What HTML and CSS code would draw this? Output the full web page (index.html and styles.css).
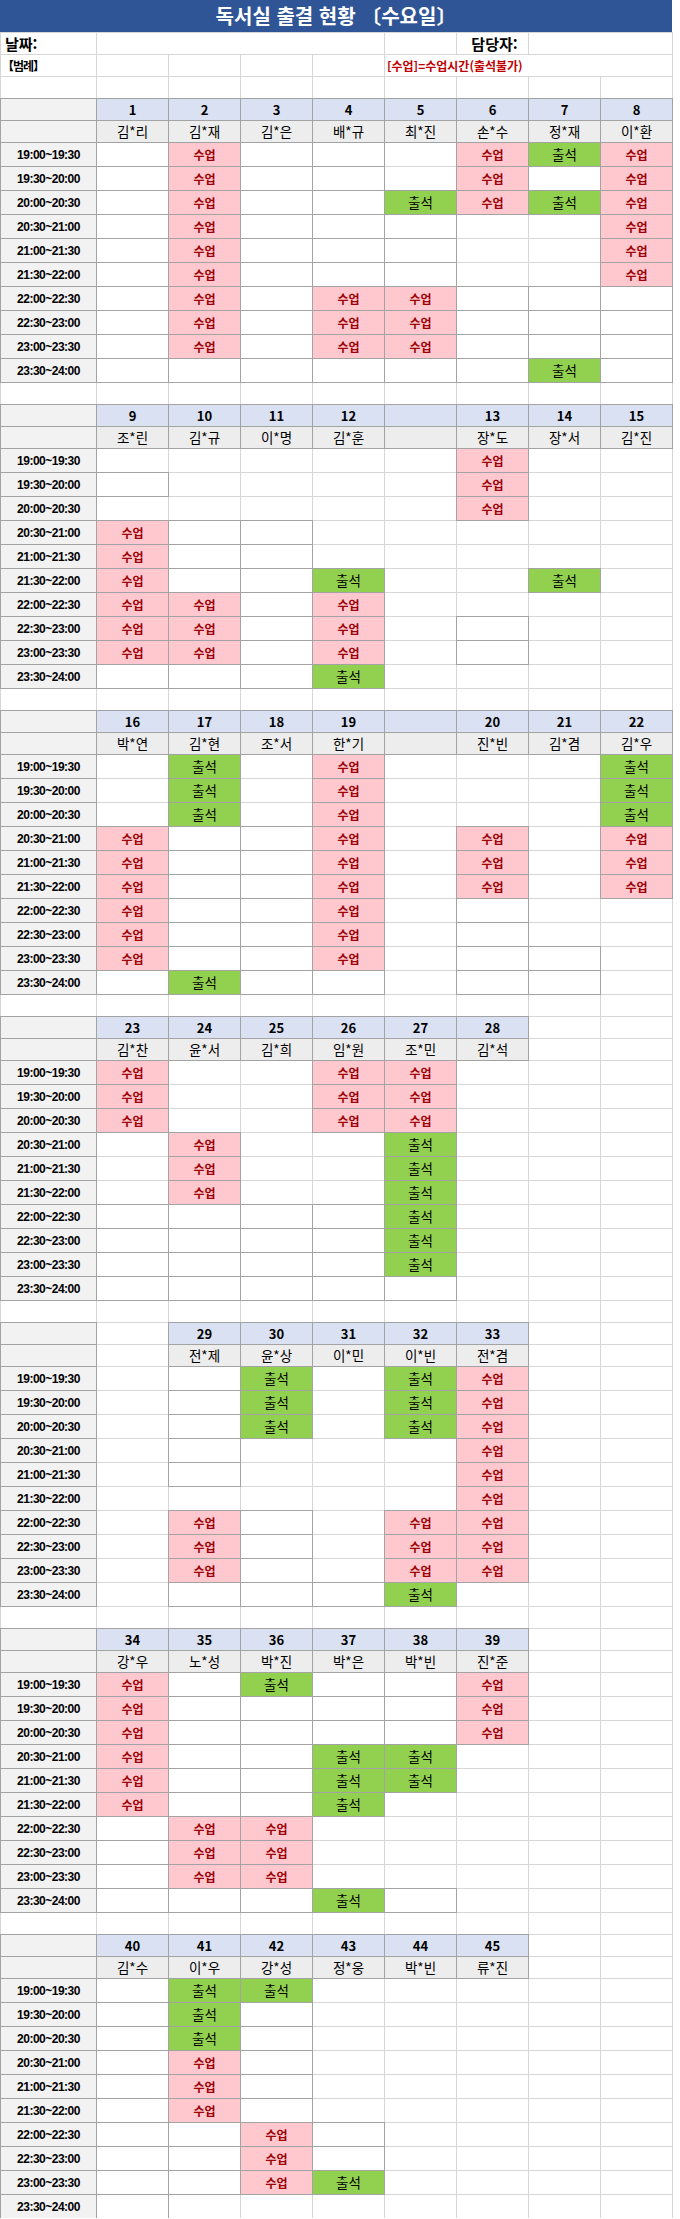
FILE: index.html
```html
<!DOCTYPE html>
<html lang="ko">
<head>
<meta charset="utf-8">
<title>독서실 출결 현황</title>
<link rel="stylesheet" href="styles.css">
</head>
<body>
<div class="sheet">
  <div class="title">독서실 출결 현황 〔수요일〕</div>

  <div class="row">
    <div class="c left big">날짜:</div>
    <div class="c span4"></div>
    <div class="c"></div>
    <div class="c big">담당자:</div>
    <div class="c span2"></div>
  </div>
  <div class="row">
    <div class="c left legend">【범례】</div>
    <div class="c"></div><div class="c"></div><div class="c"></div><div class="c"></div>
    <div class="c span4 left note">[수업]=수업시간(출석불가)</div>
  </div>
  <div class="row">
    <div class="c"></div><div class="c"></div><div class="c"></div><div class="c"></div><div class="c"></div><div class="c"></div><div class="c"></div><div class="c"></div><div class="c"></div>
  </div>

  <!-- Block 1 -->
  <div class="row">
    <div class="c lbl"></div>
    <div class="c num">1</div><div class="c num">2</div><div class="c num">3</div><div class="c num">4</div><div class="c num">5</div><div class="c num">6</div><div class="c num">7</div><div class="c num">8</div>
  </div>
  <div class="row">
    <div class="c lbl"></div>
    <div class="c nm">김*리</div><div class="c nm">김*재</div><div class="c nm">김*은</div><div class="c nm">배*규</div><div class="c nm">최*진</div><div class="c nm">손*수</div><div class="c nm">정*재</div><div class="c nm">이*환</div>
  </div>
  <div class="row tr"><div class="c lbl">19:00~19:30</div>
    <div class="c bd"></div><div class="c cls">수업</div><div class="c bd"></div><div class="c bd"></div><div class="c"></div><div class="c cls">수업</div><div class="c att">출석</div><div class="c cls">수업</div></div>
  <div class="row tr"><div class="c lbl">19:30~20:00</div>
    <div class="c bd"></div><div class="c cls">수업</div><div class="c bd"></div><div class="c bd"></div><div class="c"></div><div class="c cls">수업</div><div class="c bd"></div><div class="c cls">수업</div></div>
  <div class="row tr"><div class="c lbl">20:00~20:30</div>
    <div class="c bd"></div><div class="c cls">수업</div><div class="c bd"></div><div class="c bd"></div><div class="c att">출석</div><div class="c cls">수업</div><div class="c att">출석</div><div class="c cls">수업</div></div>
  <div class="row tr"><div class="c lbl">20:30~21:00</div>
    <div class="c bd"></div><div class="c cls">수업</div><div class="c bd"></div><div class="c bd"></div><div class="c bd"></div><div class="c"></div><div class="c"></div><div class="c cls">수업</div></div>
  <div class="row tr"><div class="c lbl">21:00~21:30</div>
    <div class="c bd"></div><div class="c cls">수업</div><div class="c bd"></div><div class="c bd"></div><div class="c bd"></div><div class="c"></div><div class="c"></div><div class="c cls">수업</div></div>
  <div class="row tr"><div class="c lbl">21:30~22:00</div>
    <div class="c bd"></div><div class="c cls">수업</div><div class="c bd"></div><div class="c bd"></div><div class="c bd"></div><div class="c"></div><div class="c"></div><div class="c cls">수업</div></div>
  <div class="row tr"><div class="c lbl">22:00~22:30</div>
    <div class="c bd"></div><div class="c cls">수업</div><div class="c bd"></div><div class="c cls">수업</div><div class="c cls">수업</div><div class="c bd"></div><div class="c bd"></div><div class="c bd"></div></div>
  <div class="row tr"><div class="c lbl">22:30~23:00</div>
    <div class="c bd"></div><div class="c cls">수업</div><div class="c bd"></div><div class="c cls">수업</div><div class="c cls">수업</div><div class="c bd"></div><div class="c bd"></div><div class="c bd"></div></div>
  <div class="row tr"><div class="c lbl">23:00~23:30</div>
    <div class="c bd"></div><div class="c cls">수업</div><div class="c bd"></div><div class="c cls">수업</div><div class="c cls">수업</div><div class="c bd"></div><div class="c bd"></div><div class="c bd"></div></div>
  <div class="row tr"><div class="c lbl">23:30~24:00</div>
    <div class="c bd"></div><div class="c bd"></div><div class="c bd"></div><div class="c bd"></div><div class="c bd"></div><div class="c bd"></div><div class="c att">출석</div><div class="c bd"></div></div>
  <div class="row">
    <div class="c"></div><div class="c"></div><div class="c"></div><div class="c"></div><div class="c"></div><div class="c"></div><div class="c"></div><div class="c"></div><div class="c"></div>
  </div>

  <!-- Block 2 -->
  <div class="row">
    <div class="c lbl"></div>
    <div class="c num">9</div><div class="c num">10</div><div class="c num">11</div><div class="c num">12</div><div class="c num"></div><div class="c num">13</div><div class="c num">14</div><div class="c num">15</div>
  </div>
  <div class="row">
    <div class="c lbl"></div>
    <div class="c nm">조*린</div><div class="c nm">김*규</div><div class="c nm">이*명</div><div class="c nm">김*훈</div><div class="c nm"></div><div class="c nm">장*도</div><div class="c nm">장*서</div><div class="c nm">김*진</div>
  </div>
  <div class="row tr"><div class="c lbl">19:00~19:30</div>
    <div class="c"></div><div class="c"></div><div class="c"></div><div class="c"></div><div class="c"></div><div class="c cls">수업</div><div class="c"></div><div class="c"></div></div>
  <div class="row tr"><div class="c lbl">19:30~20:00</div>
    <div class="c bd"></div><div class="c"></div><div class="c"></div><div class="c"></div><div class="c"></div><div class="c cls">수업</div><div class="c"></div><div class="c"></div></div>
  <div class="row tr"><div class="c lbl">20:00~20:30</div>
    <div class="c"></div><div class="c"></div><div class="c"></div><div class="c"></div><div class="c"></div><div class="c cls">수업</div><div class="c"></div><div class="c"></div></div>
  <div class="row tr"><div class="c lbl">20:30~21:00</div>
    <div class="c cls">수업</div><div class="c bd"></div><div class="c bd"></div><div class="c"></div><div class="c"></div><div class="c"></div><div class="c"></div><div class="c"></div></div>
  <div class="row tr"><div class="c lbl">21:00~21:30</div>
    <div class="c cls">수업</div><div class="c bd"></div><div class="c bd"></div><div class="c"></div><div class="c"></div><div class="c"></div><div class="c"></div><div class="c"></div></div>
  <div class="row tr"><div class="c lbl">21:30~22:00</div>
    <div class="c cls">수업</div><div class="c bd"></div><div class="c bd"></div><div class="c att">출석</div><div class="c"></div><div class="c"></div><div class="c att">출석</div><div class="c"></div></div>
  <div class="row tr"><div class="c lbl">22:00~22:30</div>
    <div class="c cls">수업</div><div class="c cls">수업</div><div class="c bd"></div><div class="c cls">수업</div><div class="c"></div><div class="c"></div><div class="c"></div><div class="c"></div></div>
  <div class="row tr"><div class="c lbl">22:30~23:00</div>
    <div class="c cls">수업</div><div class="c cls">수업</div><div class="c bd"></div><div class="c cls">수업</div><div class="c"></div><div class="c bd"></div><div class="c"></div><div class="c"></div></div>
  <div class="row tr"><div class="c lbl">23:00~23:30</div>
    <div class="c cls">수업</div><div class="c cls">수업</div><div class="c bd"></div><div class="c cls">수업</div><div class="c"></div><div class="c bd"></div><div class="c"></div><div class="c"></div></div>
  <div class="row tr"><div class="c lbl">23:30~24:00</div>
    <div class="c bd"></div><div class="c bd"></div><div class="c bd"></div><div class="c att">출석</div><div class="c"></div><div class="c"></div><div class="c"></div><div class="c"></div></div>
  <div class="row">
    <div class="c"></div><div class="c"></div><div class="c"></div><div class="c"></div><div class="c"></div><div class="c"></div><div class="c"></div><div class="c"></div><div class="c"></div>
  </div>

  <!-- Block 3 -->
  <div class="row">
    <div class="c lbl"></div>
    <div class="c num">16</div><div class="c num">17</div><div class="c num">18</div><div class="c num">19</div><div class="c num"></div><div class="c num">20</div><div class="c num">21</div><div class="c num">22</div>
  </div>
  <div class="row">
    <div class="c lbl"></div>
    <div class="c nm">박*연</div><div class="c nm">김*현</div><div class="c nm">조*서</div><div class="c nm">한*기</div><div class="c nm"></div><div class="c nm">진*빈</div><div class="c nm">김*겸</div><div class="c nm">김*우</div>
  </div>
  <div class="row tr"><div class="c lbl">19:00~19:30</div>
    <div class="c"></div><div class="c att">출석</div><div class="c"></div><div class="c cls">수업</div><div class="c"></div><div class="c"></div><div class="c"></div><div class="c att">출석</div></div>
  <div class="row tr"><div class="c lbl">19:30~20:00</div>
    <div class="c"></div><div class="c att">출석</div><div class="c"></div><div class="c cls">수업</div><div class="c"></div><div class="c"></div><div class="c"></div><div class="c att">출석</div></div>
  <div class="row tr"><div class="c lbl">20:00~20:30</div>
    <div class="c"></div><div class="c att">출석</div><div class="c"></div><div class="c cls">수업</div><div class="c"></div><div class="c"></div><div class="c"></div><div class="c att">출석</div></div>
  <div class="row tr"><div class="c lbl">20:30~21:00</div>
    <div class="c cls">수업</div><div class="c bd"></div><div class="c bd"></div><div class="c cls">수업</div><div class="c"></div><div class="c cls">수업</div><div class="c"></div><div class="c cls">수업</div></div>
  <div class="row tr"><div class="c lbl">21:00~21:30</div>
    <div class="c cls">수업</div><div class="c bd"></div><div class="c bd"></div><div class="c cls">수업</div><div class="c"></div><div class="c cls">수업</div><div class="c"></div><div class="c cls">수업</div></div>
  <div class="row tr"><div class="c lbl">21:30~22:00</div>
    <div class="c cls">수업</div><div class="c bd"></div><div class="c bd"></div><div class="c cls">수업</div><div class="c"></div><div class="c cls">수업</div><div class="c"></div><div class="c cls">수업</div></div>
  <div class="row tr"><div class="c lbl">22:00~22:30</div>
    <div class="c cls">수업</div><div class="c bd"></div><div class="c bd"></div><div class="c cls">수업</div><div class="c"></div><div class="c bd"></div><div class="c"></div><div class="c"></div></div>
  <div class="row tr"><div class="c lbl">22:30~23:00</div>
    <div class="c cls">수업</div><div class="c bd"></div><div class="c bd"></div><div class="c cls">수업</div><div class="c"></div><div class="c bd"></div><div class="c"></div><div class="c"></div></div>
  <div class="row tr"><div class="c lbl">23:00~23:30</div>
    <div class="c cls">수업</div><div class="c bd"></div><div class="c bd"></div><div class="c cls">수업</div><div class="c"></div><div class="c bd"></div><div class="c bd"></div><div class="c"></div></div>
  <div class="row tr"><div class="c lbl">23:30~24:00</div>
    <div class="c bd"></div><div class="c att">출석</div><div class="c bd"></div><div class="c bd"></div><div class="c"></div><div class="c bd"></div><div class="c bd"></div><div class="c"></div></div>
  <div class="row">
    <div class="c"></div><div class="c"></div><div class="c"></div><div class="c"></div><div class="c"></div><div class="c"></div><div class="c"></div><div class="c"></div><div class="c"></div>
  </div>

  <!-- Block 4 -->
  <div class="row">
    <div class="c lbl"></div>
    <div class="c num">23</div><div class="c num">24</div><div class="c num">25</div><div class="c num">26</div><div class="c num">27</div><div class="c num">28</div><div class="c"></div><div class="c"></div>
  </div>
  <div class="row">
    <div class="c lbl"></div>
    <div class="c nm">김*찬</div><div class="c nm">윤*서</div><div class="c nm">김*희</div><div class="c nm">임*원</div><div class="c nm">조*민</div><div class="c nm">김*석</div><div class="c"></div><div class="c"></div>
  </div>
  <div class="row tr"><div class="c lbl">19:00~19:30</div>
    <div class="c cls">수업</div><div class="c"></div><div class="c"></div><div class="c cls">수업</div><div class="c cls">수업</div><div class="c"></div><div class="c"></div><div class="c"></div></div>
  <div class="row tr"><div class="c lbl">19:30~20:00</div>
    <div class="c cls">수업</div><div class="c"></div><div class="c"></div><div class="c cls">수업</div><div class="c cls">수업</div><div class="c"></div><div class="c"></div><div class="c"></div></div>
  <div class="row tr"><div class="c lbl">20:00~20:30</div>
    <div class="c cls">수업</div><div class="c"></div><div class="c"></div><div class="c cls">수업</div><div class="c cls">수업</div><div class="c"></div><div class="c"></div><div class="c"></div></div>
  <div class="row tr"><div class="c lbl">20:30~21:00</div>
    <div class="c"></div><div class="c cls">수업</div><div class="c"></div><div class="c"></div><div class="c att">출석</div><div class="c"></div><div class="c"></div><div class="c"></div></div>
  <div class="row tr"><div class="c lbl">21:00~21:30</div>
    <div class="c"></div><div class="c cls">수업</div><div class="c"></div><div class="c"></div><div class="c att">출석</div><div class="c"></div><div class="c"></div><div class="c"></div></div>
  <div class="row tr"><div class="c lbl">21:30~22:00</div>
    <div class="c"></div><div class="c cls">수업</div><div class="c"></div><div class="c"></div><div class="c att">출석</div><div class="c"></div><div class="c"></div><div class="c"></div></div>
  <div class="row tr"><div class="c lbl">22:00~22:30</div>
    <div class="c bd"></div><div class="c bd"></div><div class="c bd"></div><div class="c bd"></div><div class="c att">출석</div><div class="c"></div><div class="c"></div><div class="c"></div></div>
  <div class="row tr"><div class="c lbl">22:30~23:00</div>
    <div class="c bd"></div><div class="c bd"></div><div class="c bd"></div><div class="c bd"></div><div class="c att">출석</div><div class="c"></div><div class="c"></div><div class="c"></div></div>
  <div class="row tr"><div class="c lbl">23:00~23:30</div>
    <div class="c bd"></div><div class="c bd"></div><div class="c bd"></div><div class="c bd"></div><div class="c att">출석</div><div class="c"></div><div class="c"></div><div class="c"></div></div>
  <div class="row tr"><div class="c lbl">23:30~24:00</div>
    <div class="c bd"></div><div class="c bd"></div><div class="c bd"></div><div class="c bd"></div><div class="c bd"></div><div class="c"></div><div class="c"></div><div class="c"></div></div>
  <div class="row">
    <div class="c"></div><div class="c"></div><div class="c"></div><div class="c"></div><div class="c"></div><div class="c"></div><div class="c"></div><div class="c"></div><div class="c"></div>
  </div>

  <!-- Block 5 -->
  <div class="row">
    <div class="c lbl"></div>
    <div class="c"></div><div class="c num">29</div><div class="c num">30</div><div class="c num">31</div><div class="c num">32</div><div class="c num">33</div><div class="c"></div><div class="c"></div>
  </div>
  <div class="row">
    <div class="c lbl"></div>
    <div class="c"></div><div class="c nm">전*제</div><div class="c nm">윤*상</div><div class="c nm">이*민</div><div class="c nm">이*빈</div><div class="c nm">전*겸</div><div class="c"></div><div class="c"></div>
  </div>
  <div class="row tr"><div class="c lbl">19:00~19:30</div>
    <div class="c"></div><div class="c bd"></div><div class="c att">출석</div><div class="c"></div><div class="c att">출석</div><div class="c cls">수업</div><div class="c"></div><div class="c"></div></div>
  <div class="row tr"><div class="c lbl">19:30~20:00</div>
    <div class="c"></div><div class="c bd"></div><div class="c att">출석</div><div class="c"></div><div class="c att">출석</div><div class="c cls">수업</div><div class="c"></div><div class="c"></div></div>
  <div class="row tr"><div class="c lbl">20:00~20:30</div>
    <div class="c"></div><div class="c bd"></div><div class="c att">출석</div><div class="c"></div><div class="c att">출석</div><div class="c cls">수업</div><div class="c"></div><div class="c"></div></div>
  <div class="row tr"><div class="c lbl">20:30~21:00</div>
    <div class="c"></div><div class="c bd"></div><div class="c"></div><div class="c"></div><div class="c"></div><div class="c cls">수업</div><div class="c"></div><div class="c"></div></div>
  <div class="row tr"><div class="c lbl">21:00~21:30</div>
    <div class="c"></div><div class="c bd"></div><div class="c"></div><div class="c"></div><div class="c"></div><div class="c cls">수업</div><div class="c"></div><div class="c"></div></div>
  <div class="row tr"><div class="c lbl">21:30~22:00</div>
    <div class="c"></div><div class="c"></div><div class="c"></div><div class="c"></div><div class="c"></div><div class="c cls">수업</div><div class="c"></div><div class="c"></div></div>
  <div class="row tr"><div class="c lbl">22:00~22:30</div>
    <div class="c"></div><div class="c cls">수업</div><div class="c bd"></div><div class="c"></div><div class="c cls">수업</div><div class="c cls">수업</div><div class="c"></div><div class="c"></div></div>
  <div class="row tr"><div class="c lbl">22:30~23:00</div>
    <div class="c"></div><div class="c cls">수업</div><div class="c bd"></div><div class="c"></div><div class="c cls">수업</div><div class="c cls">수업</div><div class="c"></div><div class="c"></div></div>
  <div class="row tr"><div class="c lbl">23:00~23:30</div>
    <div class="c"></div><div class="c cls">수업</div><div class="c bd"></div><div class="c"></div><div class="c cls">수업</div><div class="c cls">수업</div><div class="c"></div><div class="c"></div></div>
  <div class="row tr"><div class="c lbl">23:30~24:00</div>
    <div class="c"></div><div class="c bd"></div><div class="c bd"></div><div class="c bd"></div><div class="c att">출석</div><div class="c"></div><div class="c"></div><div class="c"></div></div>
  <div class="row">
    <div class="c"></div><div class="c"></div><div class="c"></div><div class="c"></div><div class="c"></div><div class="c"></div><div class="c"></div><div class="c"></div><div class="c"></div>
  </div>

  <!-- Block 6 -->
  <div class="row">
    <div class="c lbl"></div>
    <div class="c num">34</div><div class="c num">35</div><div class="c num">36</div><div class="c num">37</div><div class="c num">38</div><div class="c num">39</div><div class="c"></div><div class="c"></div>
  </div>
  <div class="row">
    <div class="c lbl"></div>
    <div class="c nm">강*우</div><div class="c nm">노*성</div><div class="c nm">박*진</div><div class="c nm">박*은</div><div class="c nm">박*빈</div><div class="c nm">진*준</div><div class="c"></div><div class="c"></div>
  </div>
  <div class="row tr"><div class="c lbl">19:00~19:30</div>
    <div class="c cls">수업</div><div class="c bd"></div><div class="c att">출석</div><div class="c bd"></div><div class="c bd"></div><div class="c cls">수업</div><div class="c"></div><div class="c"></div></div>
  <div class="row tr"><div class="c lbl">19:30~20:00</div>
    <div class="c cls">수업</div><div class="c bd"></div><div class="c bd"></div><div class="c bd"></div><div class="c bd"></div><div class="c cls">수업</div><div class="c"></div><div class="c"></div></div>
  <div class="row tr"><div class="c lbl">20:00~20:30</div>
    <div class="c cls">수업</div><div class="c bd"></div><div class="c bd"></div><div class="c bd"></div><div class="c bd"></div><div class="c cls">수업</div><div class="c"></div><div class="c"></div></div>
  <div class="row tr"><div class="c lbl">20:30~21:00</div>
    <div class="c cls">수업</div><div class="c bd"></div><div class="c bd"></div><div class="c att">출석</div><div class="c att">출석</div><div class="c"></div><div class="c"></div><div class="c"></div></div>
  <div class="row tr"><div class="c lbl">21:00~21:30</div>
    <div class="c cls">수업</div><div class="c bd"></div><div class="c bd"></div><div class="c att">출석</div><div class="c att">출석</div><div class="c"></div><div class="c"></div><div class="c"></div></div>
  <div class="row tr"><div class="c lbl">21:30~22:00</div>
    <div class="c cls">수업</div><div class="c bd"></div><div class="c bd"></div><div class="c att">출석</div><div class="c"></div><div class="c"></div><div class="c"></div><div class="c"></div></div>
  <div class="row tr"><div class="c lbl">22:00~22:30</div>
    <div class="c bd"></div><div class="c cls">수업</div><div class="c cls">수업</div><div class="c"></div><div class="c"></div><div class="c"></div><div class="c"></div><div class="c"></div></div>
  <div class="row tr"><div class="c lbl">22:30~23:00</div>
    <div class="c bd"></div><div class="c cls">수업</div><div class="c cls">수업</div><div class="c"></div><div class="c"></div><div class="c"></div><div class="c"></div><div class="c"></div></div>
  <div class="row tr"><div class="c lbl">23:00~23:30</div>
    <div class="c bd"></div><div class="c cls">수업</div><div class="c cls">수업</div><div class="c"></div><div class="c"></div><div class="c"></div><div class="c"></div><div class="c"></div></div>
  <div class="row tr"><div class="c lbl">23:30~24:00</div>
    <div class="c bd"></div><div class="c bd"></div><div class="c bd"></div><div class="c att">출석</div><div class="c bd"></div><div class="c"></div><div class="c"></div><div class="c"></div></div>
  <div class="row">
    <div class="c"></div><div class="c"></div><div class="c"></div><div class="c"></div><div class="c"></div><div class="c"></div><div class="c"></div><div class="c"></div><div class="c"></div>
  </div>

  <!-- Block 7 -->
  <div class="row">
    <div class="c lbl"></div>
    <div class="c num">40</div><div class="c num">41</div><div class="c num">42</div><div class="c num">43</div><div class="c num">44</div><div class="c num">45</div><div class="c"></div><div class="c"></div>
  </div>
  <div class="row">
    <div class="c lbl"></div>
    <div class="c nm">김*수</div><div class="c nm">이*우</div><div class="c nm">강*성</div><div class="c nm">정*웅</div><div class="c nm">박*빈</div><div class="c nm">류*진</div><div class="c"></div><div class="c"></div>
  </div>
  <div class="row tr"><div class="c lbl">19:00~19:30</div>
    <div class="c bd"></div><div class="c att">출석</div><div class="c att">출석</div><div class="c"></div><div class="c"></div><div class="c"></div><div class="c"></div><div class="c"></div></div>
  <div class="row tr"><div class="c lbl">19:30~20:00</div>
    <div class="c bd"></div><div class="c att">출석</div><div class="c bd"></div><div class="c"></div><div class="c"></div><div class="c"></div><div class="c"></div><div class="c"></div></div>
  <div class="row tr"><div class="c lbl">20:00~20:30</div>
    <div class="c bd"></div><div class="c att">출석</div><div class="c bd"></div><div class="c"></div><div class="c"></div><div class="c"></div><div class="c"></div><div class="c"></div></div>
  <div class="row tr"><div class="c lbl">20:30~21:00</div>
    <div class="c bd"></div><div class="c cls">수업</div><div class="c bd"></div><div class="c"></div><div class="c"></div><div class="c"></div><div class="c"></div><div class="c"></div></div>
  <div class="row tr"><div class="c lbl">21:00~21:30</div>
    <div class="c bd"></div><div class="c cls">수업</div><div class="c bd"></div><div class="c"></div><div class="c"></div><div class="c"></div><div class="c"></div><div class="c"></div></div>
  <div class="row tr"><div class="c lbl">21:30~22:00</div>
    <div class="c bd"></div><div class="c cls">수업</div><div class="c bd"></div><div class="c"></div><div class="c"></div><div class="c"></div><div class="c"></div><div class="c"></div></div>
  <div class="row tr"><div class="c lbl">22:00~22:30</div>
    <div class="c bd"></div><div class="c bd"></div><div class="c cls">수업</div><div class="c bd"></div><div class="c"></div><div class="c"></div><div class="c"></div><div class="c"></div></div>
  <div class="row tr"><div class="c lbl">22:30~23:00</div>
    <div class="c bd"></div><div class="c bd"></div><div class="c cls">수업</div><div class="c bd"></div><div class="c"></div><div class="c"></div><div class="c"></div><div class="c"></div></div>
  <div class="row tr"><div class="c lbl">23:00~23:30</div>
    <div class="c bd"></div><div class="c bd"></div><div class="c cls">수업</div><div class="c att">출석</div><div class="c"></div><div class="c"></div><div class="c"></div><div class="c"></div></div>
  <div class="row tr"><div class="c lbl">23:30~24:00</div>
    <div class="c bd"></div><div class="c"></div><div class="c"></div><div class="c"></div><div class="c"></div><div class="c"></div><div class="c"></div><div class="c"></div></div>
</div>
</body>
</html>
```

FILE: styles.css
```css
* {
  box-sizing: border-box;
  margin: 0;
  padding: 0;
}

html, body {
  background: #ffffff;
}

body {
  width: 680px;
  font-family: "Noto Sans CJK KR", "Noto Sans", sans-serif;
  color: #000000;
}

.sheet {
  width: 672px;
}

.title {
  height: 32px;
  background: #2f5597;
  color: #ffffff;
  font-size: 20px;
  font-weight: 700;
  display: flex;
  align-items: center;
  justify-content: center;
  line-height: 1;
}

.row {
  display: grid;
  grid-template-columns: 96px repeat(8, 72px);
  grid-template-rows: 22px;
}

.row.tr {
  grid-template-rows: 24px;
}

.c {
  border: 1px solid #d6d6d6;
  margin: 0 -1px -1px 0;
  display: flex;
  align-items: center;
  justify-content: center;
  background: #ffffff;
  min-width: 0;
  line-height: 1;
  white-space: nowrap;
  font-size: 13px;
}

.span4 {
  grid-column: span 4;
}

.span2 {
  grid-column: span 2;
}

.left {
  justify-content: flex-start;
}

.big {
  font-size: 15px;
  font-weight: 700;
  padding-left: 4px;
}

.legend {
  font-size: 12px;
  font-weight: 700;
  padding-left: 1px;
  letter-spacing: -1px;
}

.note {
  color: #c00000;
  font-size: 12px;
  font-weight: 700;
  padding-left: 2px;
  overflow: visible;
}

.bd,
.lbl,
.num,
.nm,
.cls,
.att {
  border-color: #a3a3a3;
  z-index: 1;
}

.lbl {
  background: #f2f2f2;
  font-family: "Liberation Sans", "Noto Sans", sans-serif;
  font-size: 12px;
  font-weight: 700;
  letter-spacing: -0.5px;
}

.num {
  background: #d9e1f2;
  font-size: 13px;
  font-weight: 700;
}

.nm {
  background: #ededed;
  font-size: 13.5px;
}

.cls {
  background: #ffc7ce;
  color: #9c0006;
  font-size: 12px;
  font-weight: 700;
}

.att {
  background: #92d050;
  font-size: 13.5px;
}
```
